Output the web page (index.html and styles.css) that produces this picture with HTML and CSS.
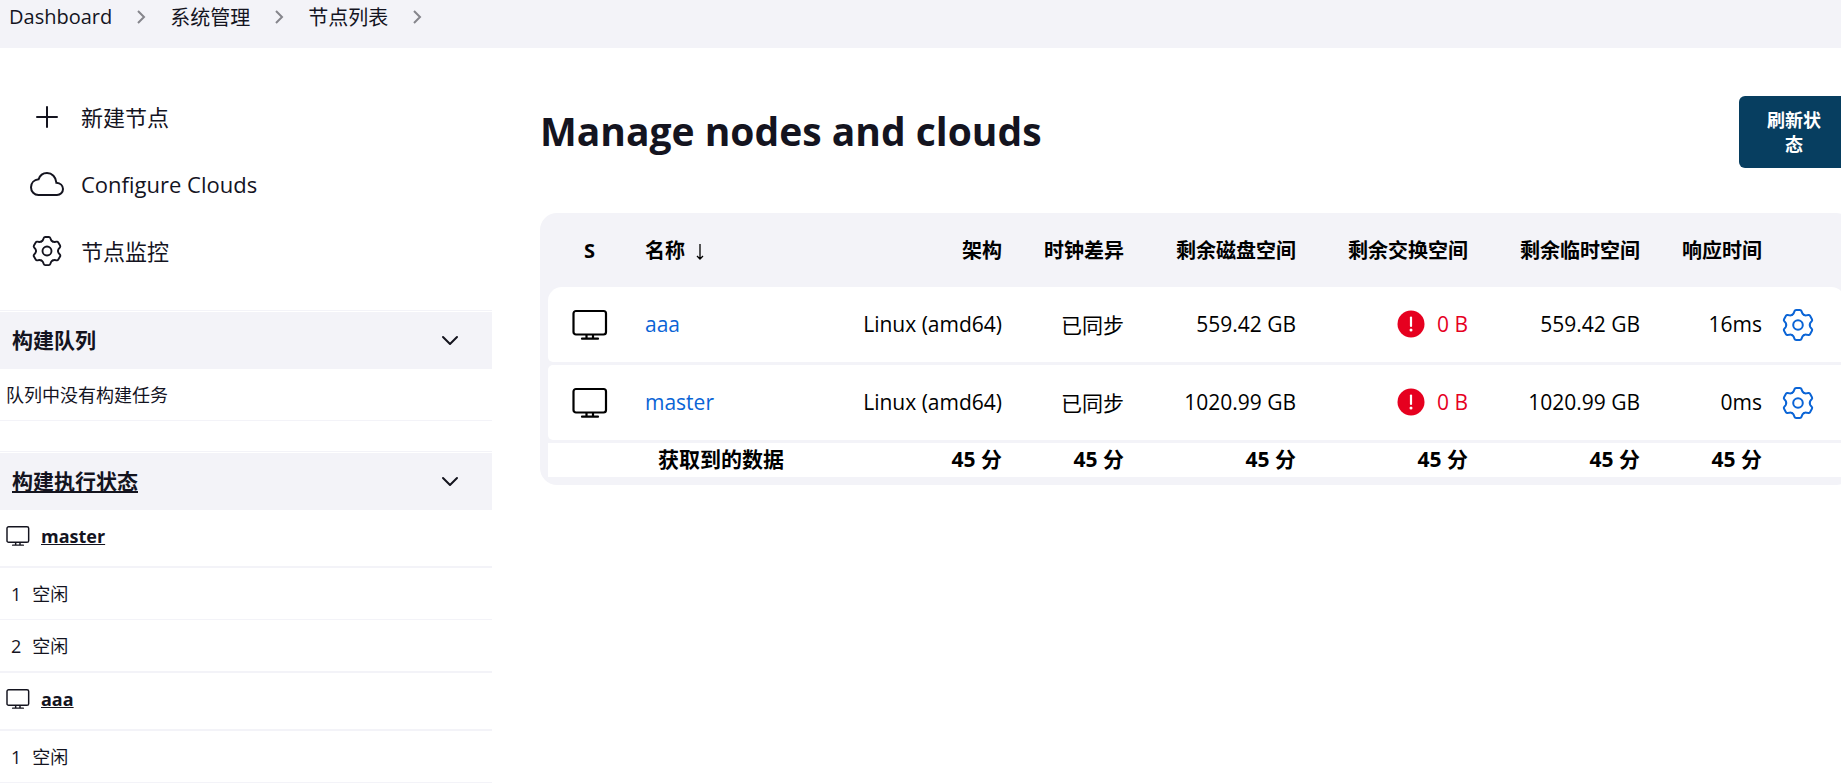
FILE: index.html
```html
<!DOCTYPE html>
<html lang="zh-CN">
<head>
<meta charset="utf-8">
<title>Manage nodes and clouds</title>
<link rel="stylesheet" href="styles.css">
</head>
<body>
<svg class="sprite" aria-hidden="true">
  <symbol id="computer" viewBox="0 0 36 32"><g fill="none" stroke="currentColor" stroke-width="2.200" stroke-linecap="round" stroke-linejoin="round"><rect x="1.500" y="2" width="32.500" height="23.500" rx="2.500"/><path d="M14.500 26v3M21 26v3M10 29.700h16"/></g></symbol>
  <path id="tooth" d="M-5.900-10.200Q-4.700-10.900-4.200-12L-3.500-13.900Q-3.100-15-1.900-15H1.900Q3.100-15 3.500-13.900L4.200-12Q4.700-10.900 5.900-10.200"/>
  <symbol id="gear" viewBox="-16 -16 32 32"><g fill="none" stroke="currentColor" stroke-width="2" stroke-linejoin="round" stroke-linecap="round"><use href="#tooth"/><use href="#tooth" transform="rotate(60)"/><use href="#tooth" transform="rotate(120)"/><use href="#tooth" transform="rotate(180)"/><use href="#tooth" transform="rotate(240)"/><use href="#tooth" transform="rotate(300)"/><circle r="4.800"/></g></symbol>
  <symbol id="chevron-right" viewBox="0 0 10 16"><path d="M2 2l6 6-6 6" fill="none" stroke="currentColor" stroke-width="2"/></symbol>
  <symbol id="chevron-down" viewBox="0 0 18 12"><path d="M2 2l7 7 7-7" fill="none" stroke="currentColor" stroke-width="2" stroke-linecap="round" stroke-linejoin="round"/></symbol>
  <symbol id="error" viewBox="0 0 28 28"><circle cx="14" cy="14" r="13.500" fill="currentColor"/><path d="M14 7.500v8.500" stroke="#fff" stroke-width="2.200" stroke-linecap="round"/><circle cx="14" cy="20" r="1.500" fill="#fff"/></symbol>
</svg>

<nav class="breadcrumbs" aria-label="Breadcrumb">
  <a href="#">Dashboard</a><svg><use href="#chevron-right"/></svg>
  <a href="#">系统管理</a><svg><use href="#chevron-right"/></svg>
  <a href="#">节点列表</a><svg><use href="#chevron-right"/></svg>
</nav>

<div class="page">
  <aside class="sidebar">
    <nav class="tasks">
      <a href="#"><svg viewBox="0 0 34 34"><path d="M17 7v20M7 17h20" stroke="currentColor" stroke-width="2" stroke-linecap="round"/></svg>新建节点</a>
      <a href="#"><svg viewBox="0 0 34 34"><path d="M8.500 28h18.500c3.300 0 6-2.500 6-6 0-3.600-2.800-6-6.600-6.300C26 10 22 6 17 6c-4.200 0-7.200 2.600-8.400 6.300C4 12.800 1 16 1 20.300 1 24.700 4.300 28 8.500 28z" fill="none" stroke="currentColor" stroke-width="2"/></svg>Configure Clouds</a>
      <a href="#"><svg class="task-gear"><use href="#gear"/></svg>节点监控</a>
    </nav>

    <section class="pane">
      <header class="pane-header"><h2>构建队列</h2><button aria-label="折叠构建队列"><svg><use href="#chevron-down"/></svg></button></header>
      <p class="pane-row">队列中没有构建任务</p>
    </section>

    <section class="pane">
      <header class="pane-header"><h2><a href="#">构建执行状态</a></h2><button aria-label="折叠构建执行状态"><svg><use href="#chevron-down"/></svg></button></header>
      <h3 class="node"><svg><use href="#computer"/></svg><a href="#">master</a></h3>
      <p class="pane-row executor"><span>1</span>空闲</p>
      <p class="pane-row executor"><span>2</span>空闲</p>
      <h3 class="node"><svg><use href="#computer"/></svg><a href="#">aaa</a></h3>
      <p class="pane-row executor"><span>1</span>空闲</p>
    </section>
  </aside>

  <main class="content">
    <div class="app-bar">
      <h1>Manage nodes and clouds</h1>
      <button class="refresh">刷新状态</button>
    </div>
    <table class="nodes">
      <colgroup><col class="c-status"><col><col class="c-arch"><col class="c-time"><col class="c-space"><col class="c-space"><col class="c-space"><col class="c-time"><col class="c-action"></colgroup>
      <thead>
        <tr><th class="status">S</th><th class="name">名称 <svg class="sort" viewBox="0 0 8 18"><path d="M4 1v15M1 13l3 3 3-3" fill="none" stroke="currentColor" stroke-width="1.300"/></svg></th><th>架构</th><th>时钟差异</th><th>剩余磁盘空间</th><th>剩余交换空间</th><th>剩余临时空间</th><th>响应时间</th><th></th></tr>
      </thead>
      <tbody>
        <tr><td class="status"><svg><use href="#computer"/></svg></td><td class="name"><a href="#">aaa</a></td><td>Linux (amd64)</td><td>已同步</td><td>559.42 GB</td><td><span class="error"><svg><use href="#error"/></svg>0 B</span></td><td>559.42 GB</td><td>16ms</td><td class="action"><a href="#" aria-label="配置 aaa"><svg><use href="#gear"/></svg></a></td></tr>
        <tr><td class="status"><svg><use href="#computer"/></svg></td><td class="name"><a href="#">master</a></td><td>Linux (amd64)</td><td>已同步</td><td>1020.99 GB</td><td><span class="error"><svg><use href="#error"/></svg>0 B</span></td><td>1020.99 GB</td><td>0ms</td><td class="action"><a href="#" aria-label="配置 master"><svg><use href="#gear"/></svg></a></td></tr>
      </tbody>
      <tfoot>
        <tr><th></th><th class="label">获取到的数据</th><th>45 分</th><th>45 分</th><th>45 分</th><th>45 分</th><th>45 分</th><th>45 分</th><th></th></tr>
      </tfoot>
    </table>
  </main>
</div>
</body>
</html>
```

FILE: styles.css
```css
:root {
  --text: #14141f;
  --panel: #f3f3f8;
  --link: #0a64d6;
}
* { box-sizing: border-box; }
body {
  margin: 0;
  overflow: hidden;
  background: #fff;
  color: var(--text);
  font-family: "Open Sans", "Noto Sans CJK SC", sans-serif;
  font-size: 20px;
}
h1, h2, h3, p { margin: 0; }
button { border: 0; background: none; color: inherit; font: inherit; padding: 0; }
.sprite { position: absolute; width: 0; height: 0; }

.breadcrumbs {
  display: flex;
  align-items: center;
  height: 48px;
  padding: 0 9px 15px;
  background: var(--panel);
}
.breadcrumbs a { color: inherit; text-decoration: none; }
.breadcrumbs svg { width: 10px; height: 16px; margin: 0 24px; color: #85858c; }

.page { display: flex; }
.sidebar { flex: none; width: 492px; }
.tasks { padding: 35px 0 26px 30px; }
.tasks a {
  display: flex;
  align-items: center;
  gap: 17px;
  height: 67px;
  color: inherit;
  font-size: 22px;
  line-height: 30px;
  text-decoration: none;
}
.tasks svg { width: 34px; height: 34px; }
.tasks .task-gear { padding: 2px; }

.pane { margin-bottom: 30px; border-top: 1px solid var(--panel); padding-top: 1px; }
.pane-header {
  display: flex;
  align-items: center;
  justify-content: space-between;
  height: 57px;
  padding: 0 33px 0 12px;
  background: var(--panel);
}
.pane-header h2 { padding-bottom: 3px; font-size: 21px; }
.pane-header a, .node a { color: inherit; }
.pane-header svg { display: block; width: 18px; height: 12px; }
.pane-row {
  height: 52px;
  padding: 13px 6px 12px;
  border-bottom: 1px solid var(--panel);
  font-size: 18px;
  line-height: 26px;
}
.executor { display: flex; gap: 11px; padding-left: 11px; }
.node {
  display: flex;
  gap: 11px;
  height: 58px;
  padding: 13px 6px;
  border-bottom: 2px solid var(--panel);
  font-size: 18px;
  line-height: 26px;
}
.executor + .node { height: 59px; border-top: 1px solid var(--panel); }
.node svg { width: 24px; height: 26px; }

.content { flex: 1; margin: 48px -12px 0 48px; }
.app-bar {
  display: flex;
  align-items: flex-start;
  justify-content: space-between;
  height: 117px;
  padding-right: 4px;
}
h1 { font-size: 39px; line-height: 70px; }
.refresh {
  width: 110px;
  padding: 12px 26px;
  border-radius: 6px;
  background: #073e60;
  color: #fff;
  font-size: 18px;
  font-weight: 700;
  line-height: 24px;
}

.nodes {
  width: 100%;
  padding: 0 8px 5px;
  border-collapse: separate;
  border-spacing: 0 3px;
  border-radius: 17px;
  background: var(--panel);
  color: #000;
  table-layout: fixed;
}
.c-status { width: 83px; }
.c-arch { width: 205px; }
.c-time { width: 122px; }
.c-space { width: 172px; }
.c-action { width: 69px; }
.nodes th, .nodes td { padding: 0 14px 2px; text-align: right; white-space: nowrap; }
.nodes thead th { height: 68px; }
.nodes td { height: 75px; background: #fff; font-size: 21px; }
.nodes tfoot th { height: 34px; background: #fff; font-size: 21px; line-height: 28px; }
.nodes .name { text-align: left; }
.nodes .status, .nodes .label { text-align: center; }
.nodes a { color: var(--link); text-decoration: none; }
.nodes svg { vertical-align: middle; }
.nodes .status { padding-bottom: 0; }
.nodes .status svg { width: 36px; height: 32px; }
.nodes .sort { width: 8px; height: 18px; margin-left: 6px; }
.error {
  display: flex;
  align-items: center;
  justify-content: flex-end;
  gap: 12px;
  color: #e6001f;
}
.error svg { width: 28px; height: 28px; }
.nodes .action { padding: 0 6px; text-align: left; }
.nodes .action svg { width: 32px; height: 32px; }
tbody td:first-child { border-radius: 5px 0 0 5px; }
tbody td:last-child { border-radius: 0 5px 5px 0; }
tbody tr:first-child td:first-child { border-top-left-radius: 14px; }
tbody tr:first-child td:last-child { border-top-right-radius: 14px; }
```
